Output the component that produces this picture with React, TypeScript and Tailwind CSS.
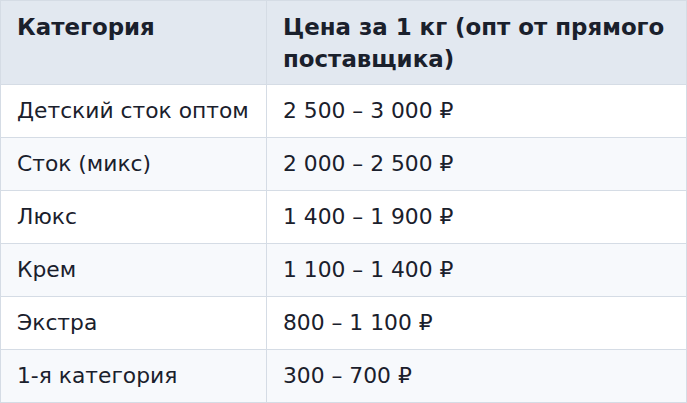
const rows = [
  ["Детский сток оптом", "2 500 – 3 000 ₽"],
  ["Сток (микс)", "2 000 – 2 500 ₽"],
  ["Люкс", "1 400 – 1 900 ₽"],
  ["Крем", "1 100 – 1 400 ₽"],
  ["Экстра", "800 – 1 100 ₽"],
  ["1-я категория", "300 – 700 ₽"],
];

const App = () => {
  return (
    <div className="bg-white font-['DejaVu_Sans',sans-serif] text-[#1a202c]">
      <table className="w-full border-collapse border border-[#d5dce5] text-[21.8px] leading-[32px]">
        <thead>
          <tr className="bg-[#e2e8f0]">
            <th className="w-[266px] border border-[#d5dce5] px-4 pt-[10px] pb-[9px] text-left align-top text-[22.9px] leading-[32px] font-bold">
              Категория
            </th>
            <th className="border border-[#d5dce5] px-4 pt-[10px] pb-[9px] text-left align-top text-[22.9px] leading-[32px] font-bold">
              Цена за 1 кг (опт от прямого поставщика)
            </th>
          </tr>
        </thead>
        <tbody>
          {rows.map(([name, price], i) => (
            <tr key={name} className={i % 2 === 1 ? "bg-[#f7f9fc]" : "bg-white"}>
              <td className="border border-[#d5dce5] px-4 py-[10px]">{name}</td>
              <td className="border border-[#d5dce5] px-4 py-[10px]">{price}</td>
            </tr>
          ))}
        </tbody>
      </table>
    </div>
  );
};

export default App;
